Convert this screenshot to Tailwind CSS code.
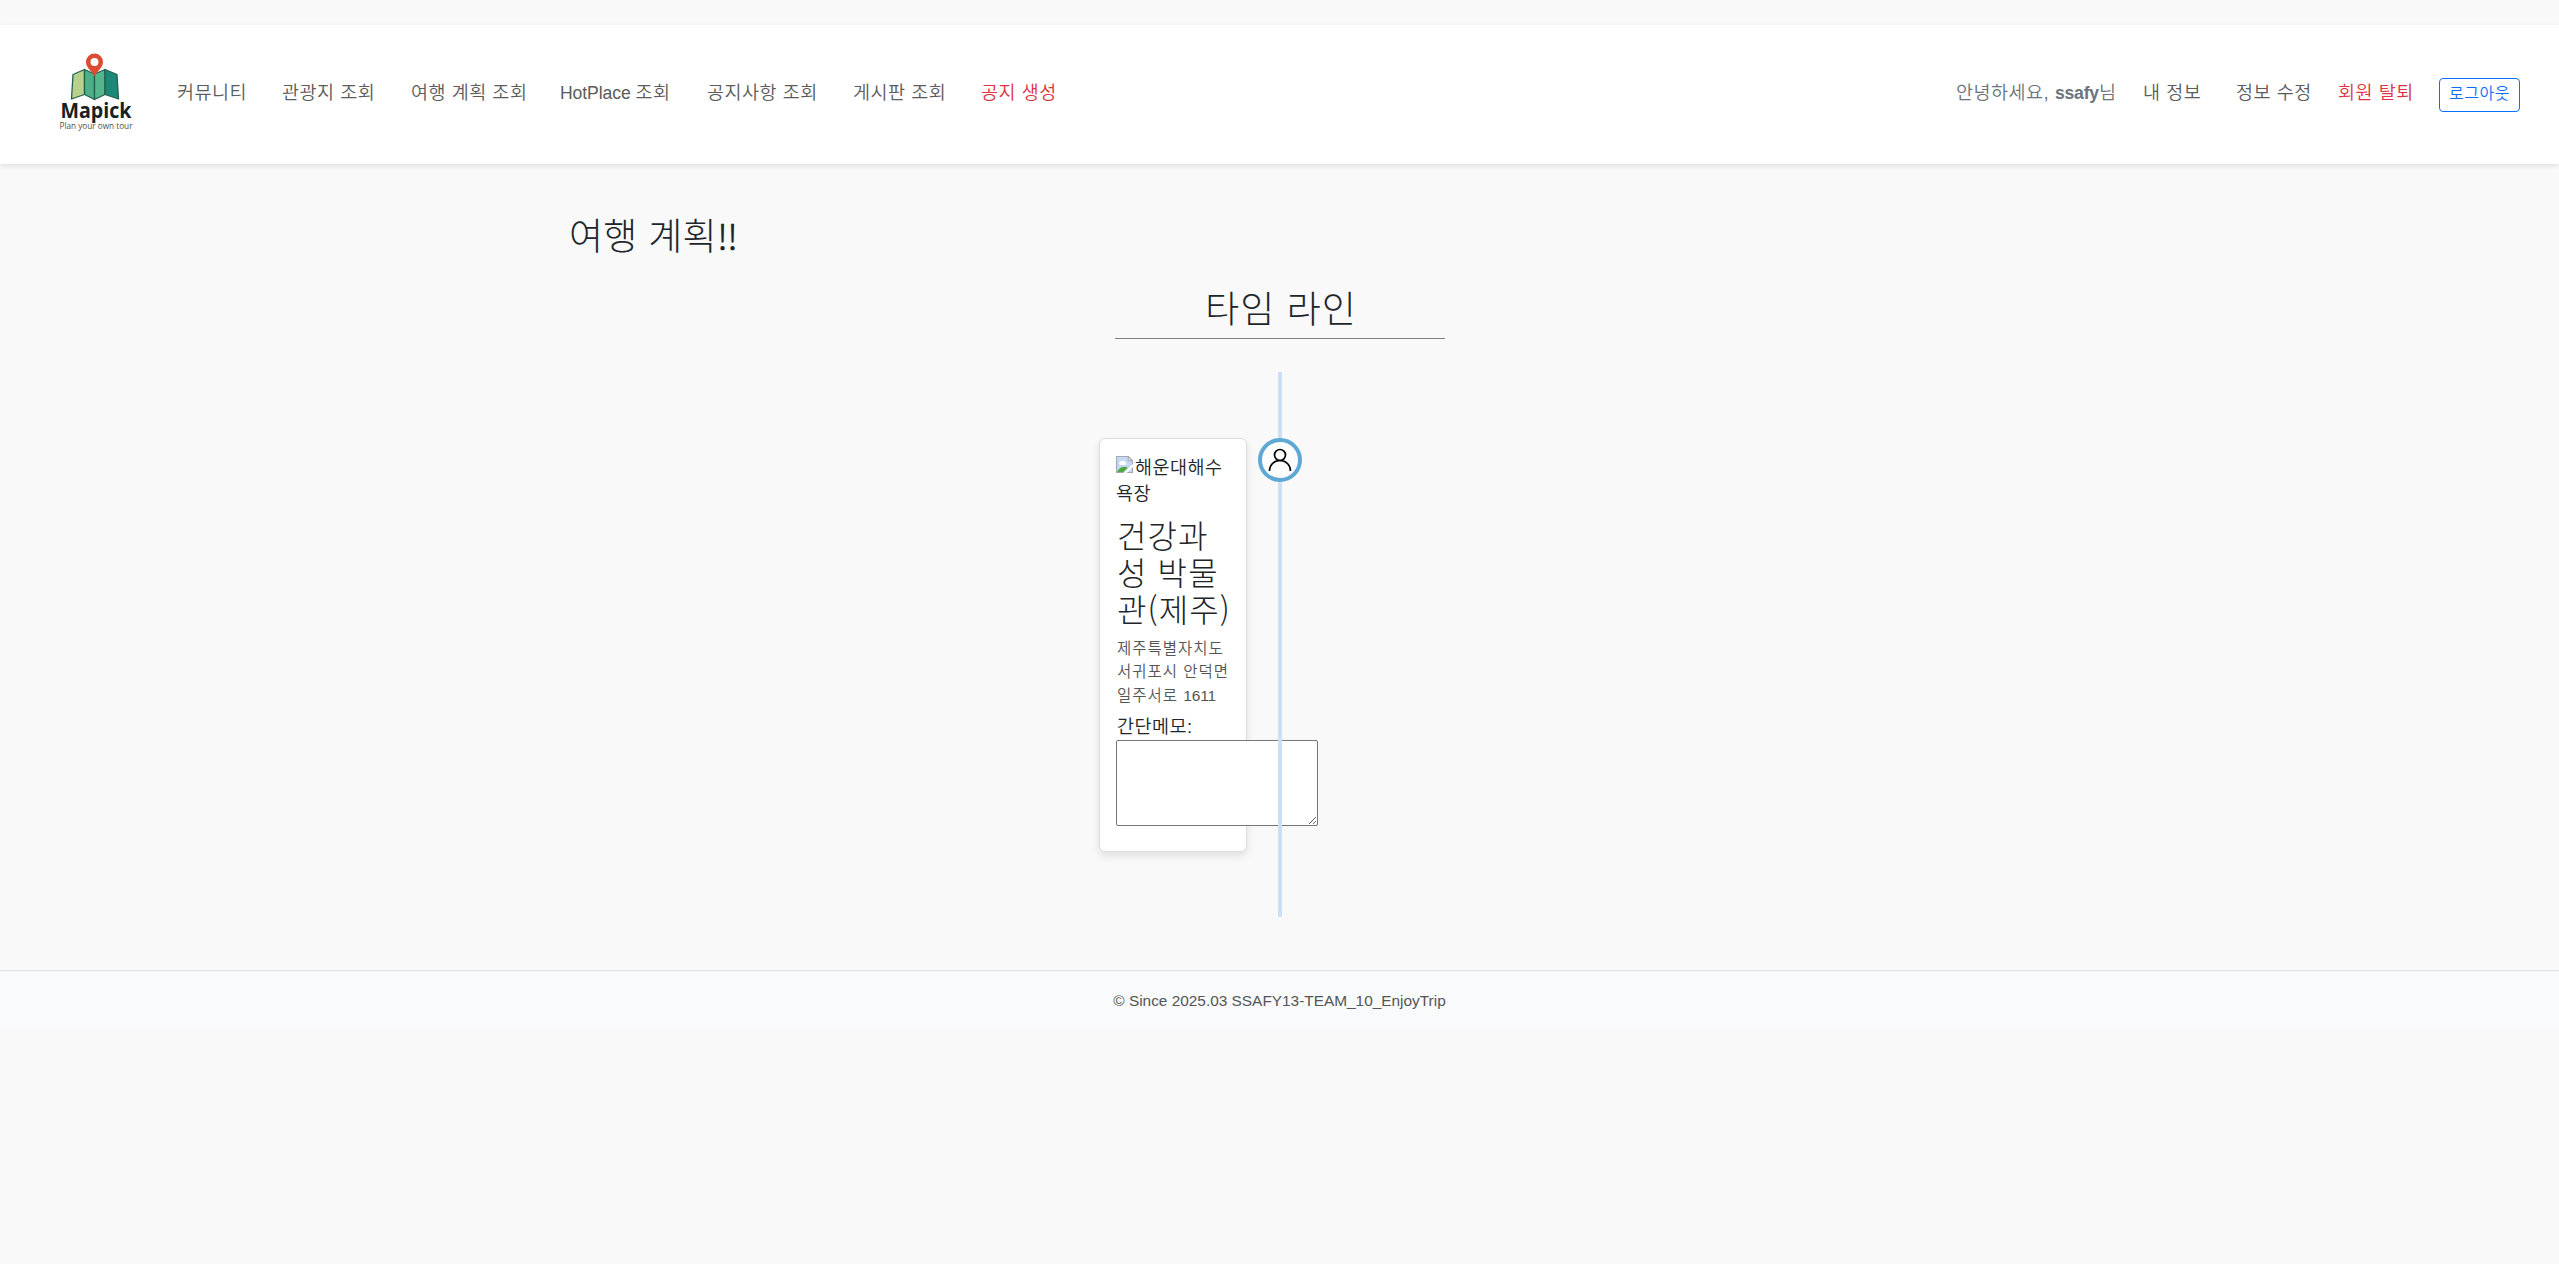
<!DOCTYPE html>
<html lang="ko">
<head>
<meta charset="utf-8">
<title>Mapick</title>
<script src="https://cdn.jsdelivr.net/npm/@tailwindcss/browser@4"></script>
</head>
<body class="bg-[#f9f9f9] pt-[25px] font-['Liberation_Sans','Noto_Sans_CJK_KR',sans-serif] font-[350] text-[#212529]">
<header class="flex h-[139px] items-center bg-white pr-[39px] pb-[3px] pl-[54px] shadow-[0_2px_5px_rgba(0,0,0,0.1)]">
  <a class="mr-[41px] block h-[84px] w-[82px] shrink-0">
    <svg class="block overflow-visible" width="82" height="84" viewBox="54 51 82 84">
      <g stroke="#23614f" stroke-width="1.3" stroke-linejoin="round">
        <path d="M73 74.500L84.500 69.500V94.500L71.500 99Z" fill="#b8d08d"/>
        <path d="M84.500 69.500L94.500 74V99.500L84.500 94.500Z" fill="#4caf87"/>
        <path d="M94.500 74L105 69.500V94.500L94.500 99.500Z" fill="#55b68d"/>
        <path d="M105 69.500L117 74.500L118.500 99L105 94.500Z" fill="#1c8878"/>
      </g>
      <path fill-rule="evenodd" d="M94.500 53.500a8.500 8.500 0 0 0-8.500 8.500c0 5.500 5 8 8.500 14.500c3.500-6.500 8.500-9 8.500-14.500a8.500 8.500 0 0 0-8.500-8.500Zm0 4.500a4 4 0 1 1 0 8a4 4 0 0 1 0-8Z" fill="#dc4c33"/>
      <text x="60.500" y="117.500" textLength="71" lengthAdjust="spacingAndGlyphs" font-family="Open Sans" font-weight="700" font-size="21" fill="#14231f">Mapick</text>
      <text x="59.500" y="128.500" textLength="73" lengthAdjust="spacingAndGlyphs" font-family="Open Sans" font-weight="500" font-size="8.500" fill="#4f4f3c">Plan your own tour</text>
    </svg>
  </a>
  <nav class="flex text-[18.500px] leading-[26px] tracking-[0.500px] whitespace-nowrap text-[#5c5c5c]">
    <a class="w-[105px]">커뮤니티</a>
    <a class="w-[129px]">관광지 조회</a>
    <a class="w-[149px]">여행 계획 조회</a>
    <a class="w-[147px]"><span class="text-[17.600px] tracking-[-0.100px]">HotPlace </span>조회</a>
    <a class="w-[146px]">공지사항 조회</a>
    <a class="w-[128px]">게시판 조회</a>
    <a class="text-[#dc3545]">공지 생성</a>
  </nav>
  <div class="ml-auto flex items-center text-[18.500px] leading-[26px] tracking-[0.500px] whitespace-nowrap text-[#5c5c5c]">
    <span class="w-[187px] text-[#6c757d]">안녕하세요, <b class="text-[17.600px] font-bold tracking-[-0.200px]">ssafy</b>님</span>
    <a class="w-[93px]">내 정보</a>
    <a class="w-[102px]">정보 수정</a>
    <a class="w-[101px] text-[#dc3545]">회원 탈퇴</a>
    <button class="mt-[4px] h-[34px] w-[81px] rounded-[4px] border border-[#0d6efd] pb-[2px] text-[16px] text-[#0d6efd]">로그아웃</button>
  </div>
</header>
<main class="h-[806px] pt-[43px]">
  <h2 class="ml-[569px] h-[56px] text-[37px] leading-[56px] font-light tracking-[0.300px]">여행 계획<span class="font-['Noto_Sans_CJK_KR',sans-serif] text-[35px] font-[350] tracking-[-1px]">!!</span></h2>
  <section class="ml-[1115px] w-[330px]">
    <h2 class="mt-[17px] h-[59px] border-b border-[#808080] pt-[2px] pl-[2px] text-center text-[37px] leading-[58px] font-light tracking-[1px]">타임 라인</h2>
    <div class="relative mt-[33px] h-[545px]">
      <article class="absolute top-[66px] -left-[16px] h-[414px] w-[148px] rounded-[6px] border border-[#ddd] bg-white px-[16px] pt-[16px] shadow-[0_4px_8px_rgba(0,0,0,0.1)]">
        <p class="h-[53px] w-[112px] text-[18.500px] leading-[26.400px] tracking-[0.500px] whitespace-nowrap"><svg class="mt-[1px] mr-[2px] inline-block align-top" width="17" height="17" viewBox="0 0 16 16"><path d="M.5.5H11.500L15.500 4.500V15.500H.5Z" fill="#c5d9f5" stroke="#a5a9ae"/><path d="M3 7.500a2 2 0 0 1 2-2.500a2.500 2.500 0 0 1 4 1a1.500 1.500 0 0 1 0 2.500H4Z" fill="#fff"/><path d="M1 15C3 10.500 8 9 11 11L7 15Z" fill="#4ea83d"/><path d="M11.500.5V4.500H15.500Z" fill="#eee" stroke="#a5a9ae"/><path d="M7 16L16 7.500V10L10 16Z" fill="#fff"/></svg>해운대해수<br>욕장</p>
        <h3 class="mt-[8px] h-[113px] pl-[1px] font-['Noto_Sans_CJK_KR',sans-serif] text-[32px] leading-[37.200px] font-light tracking-[1.100px] whitespace-nowrap">건강과<br>성 박물<br>관(제주)</h3>
        <p class="mt-[8px] h-[70px] pl-[1px] text-[15.500px] leading-[23.300px] tracking-[1px] whitespace-nowrap text-[#555]">제주특별자치도<br>서귀포시 안덕면<br>일주서로 <span class="tracking-[-0.200px]">1611</span></p>
        <label class="mt-[7px] block h-[26px] pl-[1px] text-[18.500px] leading-[26px] tracking-[0.500px]">간단메모:</label>
        <textarea class="block h-[86px] w-[202px] rounded-[2px] border border-[#767676] bg-white"></textarea>
      </article>
      <div class="absolute top-0 left-[163px] h-[545px] w-[4px] bg-[#cce0f5]"></div>
      <div class="absolute top-[66px] left-[143px] flex size-[44px] items-center justify-center rounded-full border-4 border-[#5fa8d5] bg-white">
        <svg width="24" height="24" viewBox="0 0 24 24" fill="none" stroke="#000" stroke-width="1.700"><circle cx="12" cy="7" r="5.500"/><path d="M1.500 23c0-6 4.500-10.500 10.500-10.500s10.500 4.500 10.500 10.500"/></svg>
      </div>
    </div>
  </section>
</main>
<footer class="h-[60px] border-t border-[#dde1e5] bg-[#f8fafc] pt-[18px] text-center text-[15.400px] leading-[23px] text-[#555]">© Since 2025.03 SSAFY13-TEAM_10_EnjoyTrip</footer>
</body>
</html>
